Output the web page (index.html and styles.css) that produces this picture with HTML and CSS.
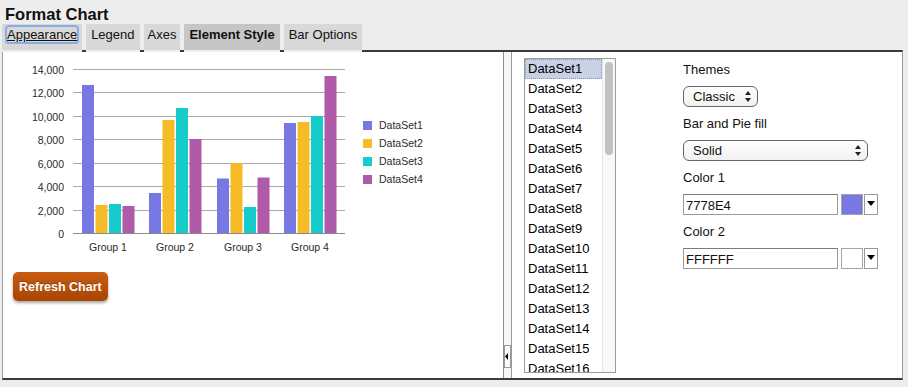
FILE: index.html
```html
<!DOCTYPE html>
<html>
<head>
<meta charset="utf-8">
<link rel="stylesheet" href="styles.css">
</head>
<body>
<h1 class="title">Format Chart</h1>
<div class="tabs">
  <div class="tab"><span class="focus">Appearance</span></div>
  <div class="tab">Legend</div>
  <div class="tab tab-narrow">Axes</div>
  <div class="tab tab-active">Element Style</div>
  <div class="tab">Bar Options</div>
</div>
<div class="panel">
  <div class="left-pane">
    <svg class="chart" width="440" height="205" viewBox="3 52 440 205">
      <g stroke="#a9a9a9" stroke-width="1">
        <line x1="73" x2="345" y1="69.5" y2="69.5"/>
        <line x1="73" x2="345" y1="92.5" y2="92.5"/>
        <line x1="73" x2="345" y1="116.5" y2="116.5"/>
        <line x1="73" x2="345" y1="139.5" y2="139.5"/>
        <line x1="73" x2="345" y1="163.5" y2="163.5"/>
        <line x1="73" x2="345" y1="186.5" y2="186.5"/>
        <line x1="73" x2="345" y1="210.5" y2="210.5"/>
      </g>
      <g font-family="Liberation Sans, Arial, sans-serif" font-size="10.5" fill="#2a2a2a" text-anchor="end">
        <text x="64" y="73.5">14,000</text>
        <text x="64" y="96.5">12,000</text>
        <text x="64" y="120.5">10,000</text>
        <text x="64" y="143.5">8,000</text>
        <text x="64" y="167.5">6,000</text>
        <text x="64" y="190.5">4,000</text>
        <text x="64" y="214.5">2,000</text>
        <text x="64" y="237.5">0</text>
      </g>
      <g fill="#7778E4">
        <rect x="82" y="85" width="12" height="148"/>
        <rect x="149" y="193" width="12" height="40"/>
        <rect x="217" y="178.5" width="12" height="54.5"/>
        <rect x="284" y="123" width="12" height="110"/>
      </g>
      <g fill="#F5BC27">
        <rect x="95.5" y="205" width="12" height="28"/>
        <rect x="162.5" y="120" width="12" height="113"/>
        <rect x="230.5" y="163" width="12" height="70"/>
        <rect x="297.5" y="122" width="12" height="111"/>
      </g>
      <g fill="#16CCCB">
        <rect x="109" y="204" width="12" height="29"/>
        <rect x="176" y="108" width="12" height="125"/>
        <rect x="244" y="207" width="12" height="26"/>
        <rect x="311" y="116" width="12" height="117"/>
      </g>
      <g fill="#B05AAA">
        <rect x="122.5" y="206" width="12" height="27"/>
        <rect x="189.5" y="139" width="12" height="94"/>
        <rect x="257.5" y="177.5" width="12" height="55.5"/>
        <rect x="324.5" y="76" width="12" height="157"/>
      </g>
      <line x1="73" x2="345" y1="233.5" y2="233.5" stroke="#8a8a8a" stroke-width="1"/>
      <g font-family="Liberation Sans, Arial, sans-serif" font-size="10.5" fill="#2a2a2a" text-anchor="middle">
        <text x="108" y="251">Group 1</text>
        <text x="175" y="251">Group 2</text>
        <text x="243" y="251">Group 3</text>
        <text x="310" y="251">Group 4</text>
      </g>
      <rect x="363" y="121" width="9" height="9" fill="#7778E4"/>
      <rect x="363" y="139" width="9" height="9" fill="#F5BC27"/>
      <rect x="363" y="157" width="9" height="9" fill="#16CCCB"/>
      <rect x="363" y="175" width="9" height="9" fill="#B05AAA"/>
      <g font-family="Liberation Sans, Arial, sans-serif" font-size="10.5" fill="#2a2a2a">
        <text x="379" y="129">DataSet1</text>
        <text x="379" y="147">DataSet2</text>
        <text x="379" y="165">DataSet3</text>
        <text x="379" y="183">DataSet4</text>
      </g>
    </svg>
    <div class="btn">Refresh Chart</div>
  </div>
  <div class="splitter">
    <div class="handle">
      <svg width="3" height="7" viewBox="0 0 3 7"><polygon points="3,0 3,7 0,3.5" fill="#000"/></svg>
    </div>
  </div>
  <div class="right-pane">
    <div class="listbox">
      <div class="items">
        <div class="item item-selected">DataSet1</div>
        <div class="item">DataSet2</div>
        <div class="item">DataSet3</div>
        <div class="item">DataSet4</div>
        <div class="item">DataSet5</div>
        <div class="item">DataSet6</div>
        <div class="item">DataSet7</div>
        <div class="item">DataSet8</div>
        <div class="item">DataSet9</div>
        <div class="item">DataSet10</div>
        <div class="item">DataSet11</div>
        <div class="item">DataSet12</div>
        <div class="item">DataSet13</div>
        <div class="item">DataSet14</div>
        <div class="item">DataSet15</div>
        <div class="item">DataSet16</div>
      </div>
      <div class="scrollbar"><div class="thumb"></div></div>
    </div>
    <div class="form">
      <div class="field">
        <div class="label">Themes</div>
        <div class="select select-short"><span class="select-text">Classic</span>
          <svg class="arrows" width="6" height="11" viewBox="0 0 6 11"><polygon points="0,4 3,0 6,4" fill="#222"/><polygon points="0,7 6,7 3,11" fill="#222"/></svg>
        </div>
      </div>
      <div class="field">
        <div class="label">Bar and Pie fill</div>
        <div class="select select-long"><span class="select-text">Solid</span>
          <svg class="arrows" width="6" height="11" viewBox="0 0 6 11"><polygon points="0,4 3,0 6,4" fill="#222"/><polygon points="0,7 6,7 3,11" fill="#222"/></svg>
        </div>
      </div>
      <div class="field">
        <div class="label">Color 1</div>
        <div class="color-row">
          <div class="input">7778E4</div>
          <div class="swatch swatch-purple"></div>
          <div class="drop"><svg width="8" height="5" viewBox="0 0 8 5"><polygon points="0,0 8,0 4,5" fill="#000"/></svg></div>
        </div>
      </div>
      <div class="field">
        <div class="label">Color 2</div>
        <div class="color-row">
          <div class="input">FFFFFF</div>
          <div class="swatch swatch-white"></div>
          <div class="drop"><svg width="8" height="5" viewBox="0 0 8 5"><polygon points="0,0 8,0 4,5" fill="#000"/></svg></div>
        </div>
      </div>
    </div>
  </div>
</div>
</body>
</html>
```

FILE: styles.css
```css
* { box-sizing: border-box; }

body {
  margin: 0;
  background: #ededed;
  font-family: "Liberation Sans", Arial, sans-serif;
  font-size: 13px;
  color: #111;
  width: 908px;
  height: 387px;
  overflow: hidden;
}

.title {
  margin: 0;
  padding: 4px 0 0 5px;
  font-size: 16.5px;
  line-height: 20px;
  font-weight: bold;
  color: #111;
}

.tabs {
  position: relative;
  display: flex;
  gap: 4px;
  padding-left: 2px;
  margin-bottom: -2px;
}

.tab {
  background: #d8d8d8;
  padding: 0 5px 4px;
  line-height: 22px;
  border-bottom: 2px solid #ededed;
  font-size: 13px;
  color: #111;
}

.tab-narrow { padding-left: 4px; padding-right: 4px; }

.tab-active {
  background: #c6c6c6;
  font-weight: bold;
}

.focus {
  text-decoration: underline;
  border-radius: 2px;
  box-shadow: 0 0 0 2px rgba(110, 160, 230, 0.75);
}

.panel {
  margin-left: 2px;
  width: 901px;
  height: 330px;
  background: #fff;
  border-top: 2px solid #3a3a3a;
  border-bottom: 2px solid #3a3a3a;
  border-left: 1px solid #9a9a9a;
  border-right: 1px solid #9a9a9a;
  display: flex;
}

.left-pane {
  width: 501px;
  border-right: 1px solid #8e8e8e;
  display: flex;
  flex-direction: column;
  align-items: flex-start;
}

.chart { display: block; }

.btn {
  margin: 15px 0 0 10px;
  height: 29px;
  padding: 0 6px;
  display: flex;
  align-items: center;
  color: #fff;
  font-weight: bold;
  font-size: 12.5px;
  border-radius: 5px;
  background: linear-gradient(#c85c12, #a84500);
  box-shadow: 0 2px 3px rgba(0, 0, 0, 0.35);
  text-shadow: 0 -1px 0 rgba(0, 0, 0, 0.25);
}

.splitter {
  width: 7px;
  background: #f6f6f6;
  display: flex;
  flex-direction: column;
  justify-content: flex-end;
}

.handle {
  height: 23px;
  margin-bottom: 10px;
  border: 1px solid #9a9a9a;
  background: #fafafa;
  display: flex;
  align-items: center;
}

.handle svg { display: block; margin-left: 0; }

.right-pane {
  flex: 1;
  border-left: 1px solid #9a9a9a;
  padding: 6px 0 0 12px;
  display: flex;
  align-items: flex-start;
}

.listbox {
  width: 92px;
  height: 315px;
  border: 1px solid #9c9c9c;
  display: flex;
  overflow: hidden;
  background: #fff;
}

.items { width: 77px; }

.item {
  height: 20px;
  line-height: 20px;
  padding-left: 3px;
  white-space: nowrap;
  font-size: 13px;
  color: #000;
}

.item-selected {
  background: #c9d1e6;
  outline: 1px dotted #8a94b0;
  outline-offset: -1px;
}

.scrollbar {
  width: 13px;
  background: #f8f8f8;
  border-left: 1px solid #e6e6e6;
  padding: 3px 0 0 2px;
}

.thumb {
  width: 8px;
  height: 93px;
  border-radius: 4px;
  background: #c2c2c2;
}

.form {
  margin-left: 67px;
  margin-top: 2px;
}

.field { margin-bottom: 7px; }

.label {
  line-height: 20px;
  font-size: 13px;
  color: #111;
}

.select {
  margin-top: 6px;
  height: 21px;
  border: 1px solid #666;
  border-radius: 6px;
  background: linear-gradient(#fefefe, #f1f1f1);
  display: flex;
  align-items: center;
  justify-content: space-between;
  padding: 0 6px 0 9px;
  font-size: 13px;
  color: #111;
}

.select-short { width: 75px; }
.select-long { width: 185px; }

.arrows { display: block; }

.color-row {
  margin-top: 6px;
  display: flex;
  height: 21px;
}

.input {
  width: 155px;
  height: 21px;
  border: 1px solid #9a9a9a;
  border-top-color: #7d7d7d;
  background: #fff;
  padding: 2px 0 0 2px;
  line-height: 17px;
  font-size: 13px;
  color: #111;
}

.swatch {
  margin-left: 3px;
  width: 22px;
  height: 21px;
  border: 1px solid #a5a5a5;
}

.swatch-purple { background: #7778E4; }
.swatch-white { background: #fff; }

.drop {
  margin-left: 1px;
  width: 14px;
  height: 21px;
  border: 1px solid #9a9a9a;
  background: #fff;
  display: flex;
  justify-content: center;
  padding-top: 6px;
}

.drop svg { display: block; }
```
